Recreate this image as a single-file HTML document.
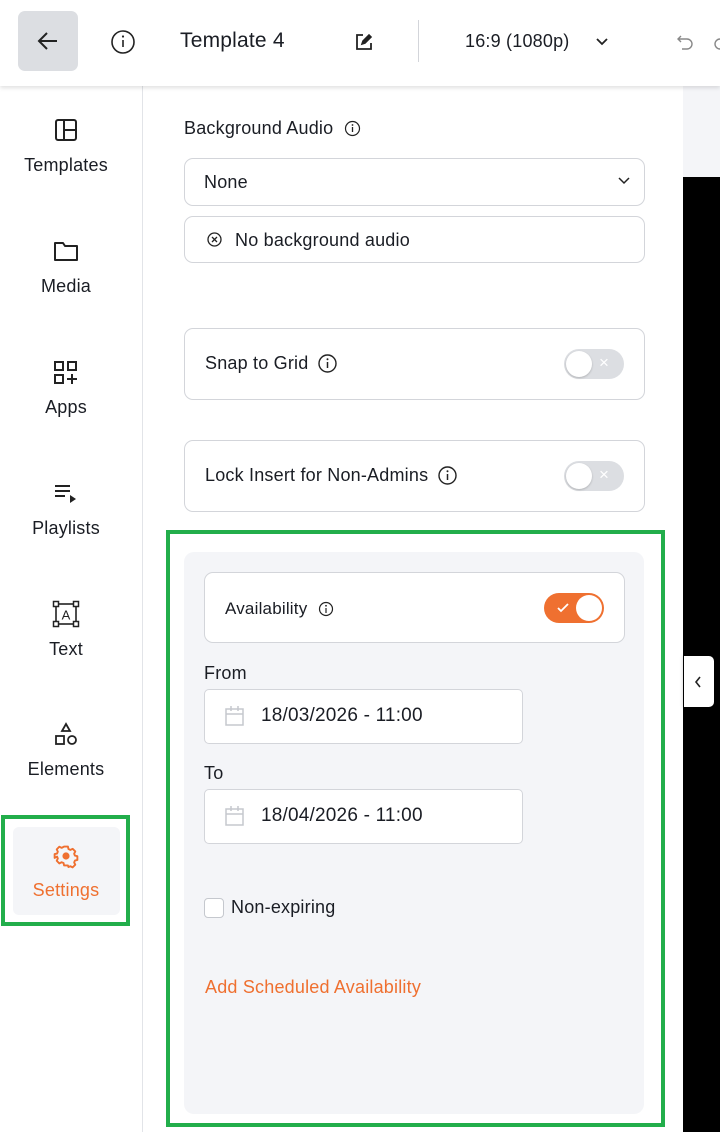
<!DOCTYPE html>
<html><head><meta charset="utf-8"><style>
*{box-sizing:border-box;margin:0;padding:0}
body{width:720px;height:1132px;overflow:hidden;background:#fff;font-family:"Liberation Sans",sans-serif;color:#1a1d24;position:relative}
.a{position:absolute}
.box{position:absolute;border:1px solid #d3d5da;border-radius:9px;background:#fff}
.t{position:absolute;font-size:18px;white-space:nowrap;letter-spacing:.2px;display:flex;align-items:center}
.t svg{margin-left:9px}
.nav{position:absolute;left:0;width:132px;text-align:center;font-size:18px;letter-spacing:.2px}
.nav svg{display:block;margin:0 auto 13px}
.tog{position:absolute;width:60px;height:30px;border-radius:15px;background:#dcdee2}
.tog .k{position:absolute;left:2px;top:2px;width:26px;height:26px;border-radius:50%;background:#fff;box-shadow:0 1px 2px rgba(0,0,0,.2)}
</style></head><body>
<!-- right area -->
<div class="a" style="left:683px;top:86px;width:37px;height:91px;background:#f4f5f8"></div>
<div class="a" style="left:683px;top:177px;width:37px;height:955px;background:#000"></div>
<div class="a" style="left:684px;top:656px;width:30px;height:51px;background:#fff;border-radius:0 5px 5px 0;box-shadow:0 0 4px rgba(0,0,0,.3)"><svg width="30" height="51"><path d="M16 21l-4 5 4 5" stroke="#222" stroke-width="1.6" fill="none"/></svg></div>
<!-- header -->
<div class="a" style="left:0;top:0;width:720px;height:86px;background:#fff;box-shadow:0 2px 4px rgba(0,0,0,.12);z-index:2">
 <div class="a" style="left:18px;top:11px;width:60px;height:60px;background:#dcdee2;border-radius:7px"><svg width="60" height="60"><path d="M39 30H21M29 22l-8 8 8 8" stroke="#222" stroke-width="2" fill="none"/></svg></div>
 <svg class="a" style="left:110px;top:29px" width="26" height="26"><circle cx="13" cy="13" r="11" stroke="#222" stroke-width="1.6" fill="none"/><path d="M13 11v7" stroke="#222" stroke-width="1.6"/><circle cx="13" cy="7.5" r="1.1" fill="#222"/></svg>
 <div class="t" style="left:180px;top:29px;font-size:21px">Template 4</div>
 <svg class="a" style="left:354px;top:32px" width="20" height="20"><path d="M9 3H3v14h14v-6" stroke="#222" stroke-width="1.8" fill="none"/><path d="M8 12l1-3 6-6 2 2-6 6z" stroke="#222" stroke-width="1.6" fill="#222"/></svg>
 <div class="a" style="left:418px;top:20px;width:1px;height:42px;background:#d3d5da"></div>
 <div class="t" style="left:465px;top:31px">16:9 (1080p)</div>
 <svg class="a" style="left:594px;top:36px" width="16" height="12"><path d="M3 3l5 5 5-5" stroke="#222" stroke-width="1.8" fill="none"/></svg>
 <svg class="a" style="left:675px;top:31px" width="22" height="22"><path d="M6 5L3 8l3 3M3 8h9a5 5 0 010 10H7" stroke="#888" stroke-width="1.4" fill="none"/></svg>
 <svg class="a" style="left:712px;top:31px" width="10" height="22"><path d="M8 8a5 5 0 000 10" stroke="#888" stroke-width="1.4" fill="none"/></svg>
</div>
<!-- sidebar -->
<div class="a" style="left:142px;top:86px;width:1px;height:1046px;background:#e2e4e8"></div>
<div class="nav" style="top:118px"><svg width="24" height="24"><rect x="2" y="2" width="20" height="20" rx="2" stroke="#222" stroke-width="2" fill="none"/><path d="M10 2v20M10 12h12" stroke="#222" stroke-width="2"/></svg>Templates</div>
<div class="nav" style="top:239px"><svg width="26" height="24"><path d="M2 4h8l2 3h12v14H2z" stroke="#222" stroke-width="2" fill="none" stroke-linejoin="round"/></svg>Media</div>
<div class="nav" style="top:360px"><svg width="26" height="24"><rect x="2" y="2" width="8" height="8" stroke="#222" stroke-width="2" fill="none"/><rect x="15" y="2" width="8" height="8" stroke="#222" stroke-width="2" fill="none"/><rect x="2" y="15" width="8" height="8" stroke="#222" stroke-width="2" fill="none"/><path d="M19 14v10M14 19h10" stroke="#222" stroke-width="2"/></svg>Apps</div>
<div class="nav" style="top:481px"><svg width="26" height="24"><path d="M2 5h15M2 10h15M2 15h10" stroke="#222" stroke-width="2"/><path d="M17 14l6 4-6 4z" fill="#222"/></svg>Playlists</div>
<div class="nav" style="top:600px"><svg width="28" height="28" style="margin-bottom:11px"><rect x="4" y="4" width="20" height="20" stroke="#222" stroke-width="1.6" fill="none"/><rect x="1.5" y="1.5" width="5" height="5" fill="#fff" stroke="#222" stroke-width="1.5"/><rect x="21.5" y="1.5" width="5" height="5" fill="#fff" stroke="#222" stroke-width="1.5"/><rect x="1.5" y="21.5" width="5" height="5" fill="#fff" stroke="#222" stroke-width="1.5"/><rect x="21.5" y="21.5" width="5" height="5" fill="#fff" stroke="#222" stroke-width="1.5"/><text x="14" y="19.5" font-size="13" text-anchor="middle" font-family="Liberation Sans" fill="#222">A</text></svg>Text</div>
<div class="nav" style="top:722px"><svg width="26" height="26" style="margin-bottom:11px"><path d="M13 2l4 7H9z" stroke="#222" stroke-width="1.8" fill="none"/><rect x="3" y="14" width="8" height="8" stroke="#222" stroke-width="1.8" fill="none"/><circle cx="19" cy="18" r="4" stroke="#222" stroke-width="1.8" fill="none"/></svg>Elements</div>
<div class="a" style="left:1px;top:815px;width:129px;height:111px;border:4px solid #22ae4b"></div>
<div class="a" style="left:13px;top:827px;width:107px;height:88px;background:#f4f5f8;border-radius:6px"></div>
<div class="nav" style="top:843px;color:#ef7030"><svg width="26" height="26" viewBox="0 0 24 24" style="margin-bottom:11px"><path d="M10 2h4l.6 2.6 2 1 2.4-1.2 2.8 2.8-1.2 2.4.8 2 2.6.6v4l-2.6.6-.8 2 1.2 2.4-2.8 2.8-2.4-1.2-2 .8L14 22h-4l-.6-2.6-2-.8-2.4 1.2-2.8-2.8 1.2-2.4-.8-2L0 14v-4l2.6-.6.8-2-1.2-2.4 2.8-2.8 2.4 1.2 2-1z" transform="translate(1.5 1.5) scale(.875)" stroke="#ef7030" stroke-width="2" fill="none" stroke-linejoin="round"/><circle cx="12" cy="12" r="3.3" fill="#ef7030"/></svg>Settings</div>
<!-- panel -->
<div class="t" style="left:184px;top:118px">Background Audio<svg width="17" height="17" style="margin-left:11px"><circle cx="8.5" cy="8.5" r="7" stroke="#222" stroke-width="1.2" fill="none"/><path d="M8.5 7v5" stroke="#222" stroke-width="1.3"/><circle cx="8.5" cy="5" r=".9" fill="#222"/></svg></div>
<div class="box" style="left:184px;top:158px;width:461px;height:48px"></div>
<div class="t" style="left:204px;top:172px">None</div>
<svg class="a" style="left:617px;top:176px" width="14" height="10"><path d="M2 2l5 5 5-5" stroke="#222" stroke-width="1.5" fill="none"/></svg>
<div class="box" style="left:184px;top:216px;width:461px;height:47px"></div>
<svg class="a" style="left:206px;top:231px" width="17" height="17"><circle cx="8.5" cy="8.5" r="6.5" stroke="#222" stroke-width="1.3" fill="none"/><path d="M6 6l5 5M11 6l-5 5" stroke="#222" stroke-width="1.3"/></svg>
<div class="t" style="left:235px;top:230px">No background audio</div>
<div class="box" style="left:184px;top:328px;width:461px;height:72px"></div>
<div class="t" style="left:205px;top:353px">Snap to Grid<svg width="21" height="21"><circle cx="10.5" cy="10.5" r="8.5" stroke="#222" stroke-width="1.4" fill="none"/><path d="M10.5 9v6" stroke="#222" stroke-width="1.5"/><circle cx="10.5" cy="6.3" r="1" fill="#222"/></svg></div>
<div class="tog" style="left:564px;top:349px"><div class="k"></div><span class="a" style="left:35px;top:4px;color:#fff;font-size:17px">×</span></div>
<div class="box" style="left:184px;top:440px;width:461px;height:72px"></div>
<div class="t" style="left:205px;top:465px">Lock Insert for Non-Admins<svg width="21" height="21"><circle cx="10.5" cy="10.5" r="8.5" stroke="#222" stroke-width="1.4" fill="none"/><path d="M10.5 9v6" stroke="#222" stroke-width="1.5"/><circle cx="10.5" cy="6.3" r="1" fill="#222"/></svg></div>
<div class="tog" style="left:564px;top:461px"><div class="k"></div><span class="a" style="left:35px;top:4px;color:#fff;font-size:17px">×</span></div>
<!-- availability -->
<div class="a" style="left:166px;top:530px;width:499px;height:597px;border:4px solid #22ae4b"></div>
<div class="a" style="left:184px;top:552px;width:460px;height:562px;background:#f4f5f8;border-radius:10px"></div>
<div class="box" style="left:204px;top:572px;width:421px;height:71px"></div>
<div class="t" style="left:225px;top:599px;font-size:17px">Availability<svg width="16" height="16" style="margin-left:11px"><circle cx="8" cy="8" r="6.5" stroke="#222" stroke-width="1.2" fill="none"/><path d="M8 7v5" stroke="#222" stroke-width="1.2"/><circle cx="8" cy="4.8" r=".9" fill="#222"/></svg></div>
<div class="a" style="left:544px;top:593px;width:60px;height:30px;border-radius:15px;background:#ef7030"><svg class="a" style="left:12px;top:9px" width="14" height="12"><path d="M2 6l3 3 7-7" stroke="#fff" stroke-width="1.8" fill="none"/></svg><div class="a" style="left:32px;top:2px;width:26px;height:26px;border-radius:50%;background:#fff"></div></div>
<div class="t" style="left:204px;top:663px">From</div>
<div class="box" style="left:204px;top:689px;width:319px;height:55px;border-radius:5px"></div>
<svg class="a" style="left:224px;top:705px" width="22" height="22"><rect x="2" y="4" width="17" height="16" stroke="#c5c8ce" stroke-width="1.5" fill="none"/><path d="M2 9h17M7 1v5M14 1v5" stroke="#c5c8ce" stroke-width="1.5"/></svg>
<div class="t" style="left:261px;top:705px;font-size:19px">18/03/2026 - 11:00</div>
<div class="t" style="left:204px;top:763px">To</div>
<div class="box" style="left:204px;top:789px;width:319px;height:55px;border-radius:5px"></div>
<svg class="a" style="left:224px;top:805px" width="22" height="22"><rect x="2" y="4" width="17" height="16" stroke="#c5c8ce" stroke-width="1.5" fill="none"/><path d="M2 9h17M7 1v5M14 1v5" stroke="#c5c8ce" stroke-width="1.5"/></svg>
<div class="t" style="left:261px;top:805px;font-size:19px">18/04/2026 - 11:00</div>
<div class="a" style="left:204px;top:898px;width:20px;height:20px;border:1px solid #c5c8ce;border-radius:4px;background:#fff"></div>
<div class="t" style="left:231px;top:897px">Non-expiring</div>
<div class="t" style="left:205px;top:977px;color:#ef7030">Add Scheduled Availability</div>
</body></html>
